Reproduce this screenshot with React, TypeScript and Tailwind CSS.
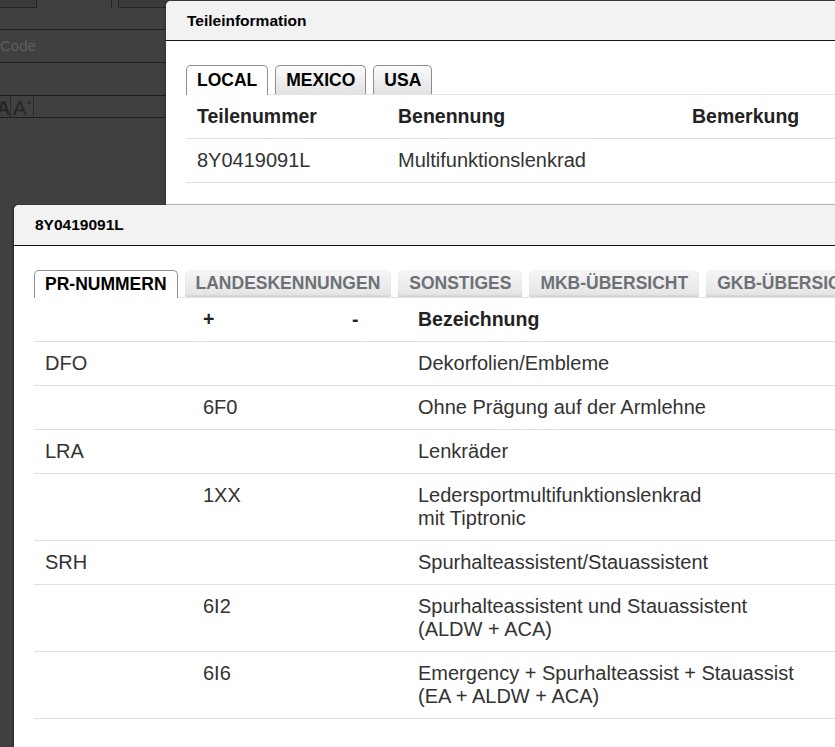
const font = "font-['Liberation_Sans',Arial,sans-serif]";

const prRows = [
  { code: "DFO", plus: "", minus: "", text: ["Dekorfolien/Embleme"] },
  { code: "", plus: "6F0", minus: "", text: ["Ohne Prägung auf der Armlehne"] },
  { code: "LRA", plus: "", minus: "", text: ["Lenkräder"] },
  { code: "", plus: "1XX", minus: "", text: ["Ledersportmultifunktionslenkrad", "mit Tiptronic"] },
  { code: "SRH", plus: "", minus: "", text: ["Spurhalteassistent/Stauassistent"] },
  { code: "", plus: "6I2", minus: "", text: ["Spurhalteassistent und Stauassistent", "(ALDW + ACA)"] },
  { code: "", plus: "6I6", minus: "", text: ["Emergency + Spurhalteassist + Stauassist", "(EA + ALDW + ACA)"] },
];

function Tab({ label, active, boxed }: { label: string; active?: boolean; boxed?: boolean }) {
  if (active) {
    return (
      <div
        className={`${boxed ? "h-[30px]" : "h-[28px]"} -mb-px px-[10px] flex items-center rounded-t-[5px] border border-b-0 border-[#8e8e8e] bg-white text-[17.5px] font-bold text-black`}>
        {label}
      </div>
    );
  }
  if (boxed) {
    return (
      <div className="h-[29px] px-[10px] flex items-center rounded-t-[5px] border border-b-0 border-[#8e8e8e] bg-linear-to-b from-[#fcfcfc] to-[#e2e2e2] text-[17.5px] font-bold text-black">
        {label}
      </div>
    );
  }
  return (
    <div className="h-[27px] px-[11px] flex items-center rounded-t-[5px] bg-linear-to-b from-[#f6f6f6] to-[#e4e4e4] shadow-[inset_0_-2px_2px_rgba(0,0,0,0.07)] text-[17.5px] font-bold text-[#6d7176] whitespace-nowrap">
      {label}
    </div>
  );
}

function Backdrop() {
  return (
    <div className="w-[166px] flex flex-col text-[#262626]">
      <div className="h-[8px] flex">
        <div className="w-[37px] border-r border-b border-[#252525] bg-[#3b3b3b]" />
        <div className="w-[74px]" />
        <div className="w-[7px] border-l border-[#252525]" />
        <div className="flex-1 border-l border-b border-[#252525] bg-[#3b3b3b]" />
      </div>
      <div className="h-[22px] border-b border-[#1f1f1f]" />
      <div className="h-[33px] border-b border-[#1f1f1f] flex items-center text-[15px] text-[#5e5e5e]">Code</div>
      <div className="h-[33px] border-b border-[#1f1f1f]" />
      <div className="h-[22px] border-b border-[#1f1f1f] flex">
        <div className="w-[11px] border-r border-[#2a2a2a] flex items-center text-[20px] leading-none font-bold overflow-hidden">
          <span className="-ml-[4px] mt-[3px]">A</span>
        </div>
        <div className="w-[23px] border-r border-[#2a2a2a] flex items-center pl-[2px] text-[20px] leading-none">
          <span className="mt-[3px]">A</span>
          <span className="text-[6px] self-start mt-[4px]">▼</span>
        </div>
      </div>
    </div>
  );
}

export default function App() {
  return (
    <div className={`${font} relative w-[835px] h-[747px] overflow-hidden bg-[#404040]`}>
      <Backdrop />

      {/* Teileinformation dialog */}
      <section className="absolute left-[166px] top-[1px] w-[760px] h-[300px] bg-white rounded-tl-[5px] overflow-hidden shadow-[0_0_3px_rgba(0,0,0,0.4)]">
        <header className="h-[40px] px-[21px] flex items-center bg-[#f2f2f2] border-b border-[#151515] text-[15.5px] font-bold text-black">
          Teileinformation
        </header>
        <div className="px-[20px] pt-[24px] pb-[21px]">
          <div className="flex items-end gap-[7px] border-b border-[#e2e3e8]">
            <Tab label="LOCAL" active boxed />
            <Tab label="MEXICO" boxed />
            <Tab label="USA" boxed />
          </div>
          <table className="w-full border-collapse text-[20px] leading-[23px] text-[#333]">
            <thead>
              <tr className="border-b border-[#dfe0e5] text-[19.5px] font-bold text-[#222] text-left">
                <th className="w-[201px] px-[11px] py-[10px] font-bold">Teilenummer</th>
                <th className="w-[294px] px-[11px] py-[10px] font-bold">Benennung</th>
                <th className="px-[11px] py-[10px] font-bold">Bemerkung</th>
              </tr>
            </thead>
            <tbody>
              <tr className="border-b border-[#dfe0e5]">
                <td className="px-[11px] py-[10px]">8Y0419091L</td>
                <td className="px-[11px] py-[10px]">Multifunktionslenkrad</td>
                <td className="px-[11px] py-[10px]" />
              </tr>
            </tbody>
          </table>
        </div>
        <div className="h-[60px] bg-[#f0f0f0] border-t border-[#c9c9c9]" />
      </section>

      {/* PR-Nummern dialog */}
      <section className="absolute left-[14px] top-[205px] w-[900px] h-[560px] bg-white rounded-tl-[5px] overflow-hidden shadow-[-1px_0_2px_rgba(0,0,0,0.45)]">
        <header className="h-[41px] px-[21px] flex items-center bg-[#f2f2f2] border-b border-[#151515] text-[15.5px] font-bold text-black">
          8Y0419091L
        </header>
        <div className="px-[20px] pt-[24px]">
          <div className="flex items-end gap-[7px] border-b border-[#e2e3e8]">
            <Tab label="PR-NUMMERN" active />
            <Tab label="LANDESKENNUNGEN" />
            <Tab label="SONSTIGES" />
            <Tab label="MKB-ÜBERSICHT" />
            <Tab label="GKB-ÜBERSICHT" />
          </div>
          <table className="w-full border-collapse text-[20px] leading-[23px] text-[#333]">
            <thead>
              <tr className="border-b border-[#dfe0e5] text-[19.5px] text-[#222] text-left">
                <th className="w-[158px] px-[11px] py-[10px]" />
                <th className="w-[149px] px-[11px] py-[10px] font-bold">+</th>
                <th className="w-[66px] px-[11px] py-[10px] font-bold">-</th>
                <th className="px-[11px] py-[10px] font-bold">Bezeichnung</th>
              </tr>
            </thead>
            <tbody>
              {prRows.map((row, i) => (
                <tr key={i} className="border-b border-[#dfe0e5] align-top">
                  <td className="px-[11px] py-[10px]">{row.code}</td>
                  <td className="px-[11px] py-[10px]">{row.plus}</td>
                  <td className="px-[11px] py-[10px]">{row.minus}</td>
                  <td className="px-[11px] py-[10px]">
                    {row.text.map((line) => (
                      <div key={line}>{line}</div>
                    ))}
                  </td>
                </tr>
              ))}
            </tbody>
          </table>
        </div>
      </section>
    </div>
  );
}
